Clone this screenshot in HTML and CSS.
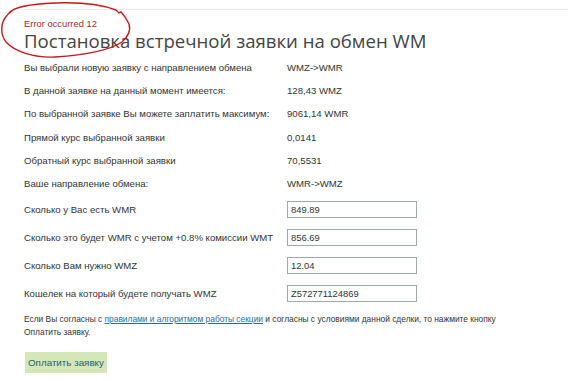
FILE: index.html
```html
<!DOCTYPE html>
<html lang="ru">
<head>
    <meta charset="UTF-8">
    <title>Постановка встречной заявки на обмен WM</title>
    <link rel="stylesheet" href="styles.css">
</head>
<body>
    <div class="topline"></div>

    <div class="content">
        <div class="error">Error occurred 12</div>
        <h1>Постановка встречной заявки на обмен WM</h1>

        <!-- данные заявки -->
        <div class="info">
            <div class="row"><span>Вы выбрали новую заявку с направлением обмена</span><span>WMZ-&gt;WMR</span></div>
            <div class="row"><span>В данной заявке на данный момент имеется:</span><span>128,43 WMZ</span></div>
            <div class="row"><span>По выбранной заявке Вы можете заплатить максимум:</span><span>9061,14 WMR</span></div>
            <div class="row"><span>Прямой курс выбранной заявки</span><span>0,0141</span></div>
            <div class="row"><span>Обратный курс выбранной заявки</span><span>70,5531</span></div>
            <div class="row"><span>Ваше направление обмена:</span><span>WMR-&gt;WMZ</span></div>
        </div>

        <!-- форма -->
        <form class="exchange-form">
            <div class="field"><label for="have">Сколько у Вас есть WMR</label><input type="text" id="have" value="849.89"></div>
            <div class="field"><label for="fee">Сколько это будет WMR с учетом +0.8% комиссии WMT</label><input type="text" id="fee" value="856.69"></div>
            <div class="field"><label for="need">Сколько Вам нужно WMZ</label><input type="text" id="need" value="12.04"></div>
            <div class="field"><label for="purse">Кошелек на который будете получать WMZ</label><input type="text" id="purse" value="Z572771124869"></div>

            <p class="agree">Если Вы согласны с <a href="#">правилами и алгоритмом работы секции</a> и согласны с условиями данной сделки, то нажмите кнопку Оплатить заявку.</p>

            <button type="submit" class="btn-pay">Оплатить заявку</button>
        </form>
    </div>

    <!-- красная обводка поверх ошибки -->
    <svg class="scribble" width="140" height="62" viewBox="0 0 140 62">
        <path d="M9 13 C 14 7, 30 4, 55 3 C 80 2, 100 4, 116 10 L 119 13 L 121 12 L 125 17 L 129 24 C 131 30, 128 37, 122 42 C 110 50, 85 55, 55 57 C 35 58, 15 52, 6 42 C 0 34, 1 24, 5 18 C 7 15, 9 13, 12 11"
              fill="none" stroke="#c8161d" stroke-width="1.4" stroke-linecap="round"/>
    </svg>
</body>
</html>
```

FILE: styles.css
```css
/* базовые стили */
body {
    margin: 0;
    padding: 0;
    background-color: #fff;
    font-family: "Liberation Sans", Arial, sans-serif;
    font-size: 9.6px;
    color: #333;
}

.topline {
    margin: 9px 0 0 24px;
    border-top: 1px solid #eaeaea;
}

.content {
    padding: 8px 24px 0 24px;
}

.error {
    color: #a8282a;
    font-size: 9.4px;
    line-height: 11px;
}

h1 {
    margin: 1px 0 4px 0;
    font-family: "Open Sans", "Segoe UI", sans-serif;
    font-weight: normal;
    font-size: 18.6px;
    line-height: 22px;
    color: #444;
}

.info .row {
    display: grid;
    grid-template-columns: 263px 1fr;
    height: 23.2px;
    align-items: center;
}

.field {
    display: grid;
    grid-template-columns: 263px 1fr;
    height: 28.2px;
    align-items: center;
}

.field input {
    width: 130px;
    height: 17px;
    box-sizing: border-box;
    padding: 0 3px;
    border: 1px solid #9aabab;
    font-family: "Liberation Sans", Arial, sans-serif;
    font-size: 9.4px;
    color: #333;
}

.agree {
    margin: 5px 0 0 0;
    font-size: 8.4px;
    line-height: 13.5px;
    width: 490px;
}

.agree a {
    color: #2a6e95;
}

.btn-pay {
    display: block;
    margin: 12px 0 0 1px;
    background-color: #d3e7b7;
    color: #2b5c76;
    border: none;
    padding: 0 3px;
    height: 21px;
    font-family: "Liberation Sans", Arial, sans-serif;
    font-size: 9.8px;
    cursor: pointer;
}

.scribble {
    position: absolute;
    left: 0;
    top: 0;
}
```
